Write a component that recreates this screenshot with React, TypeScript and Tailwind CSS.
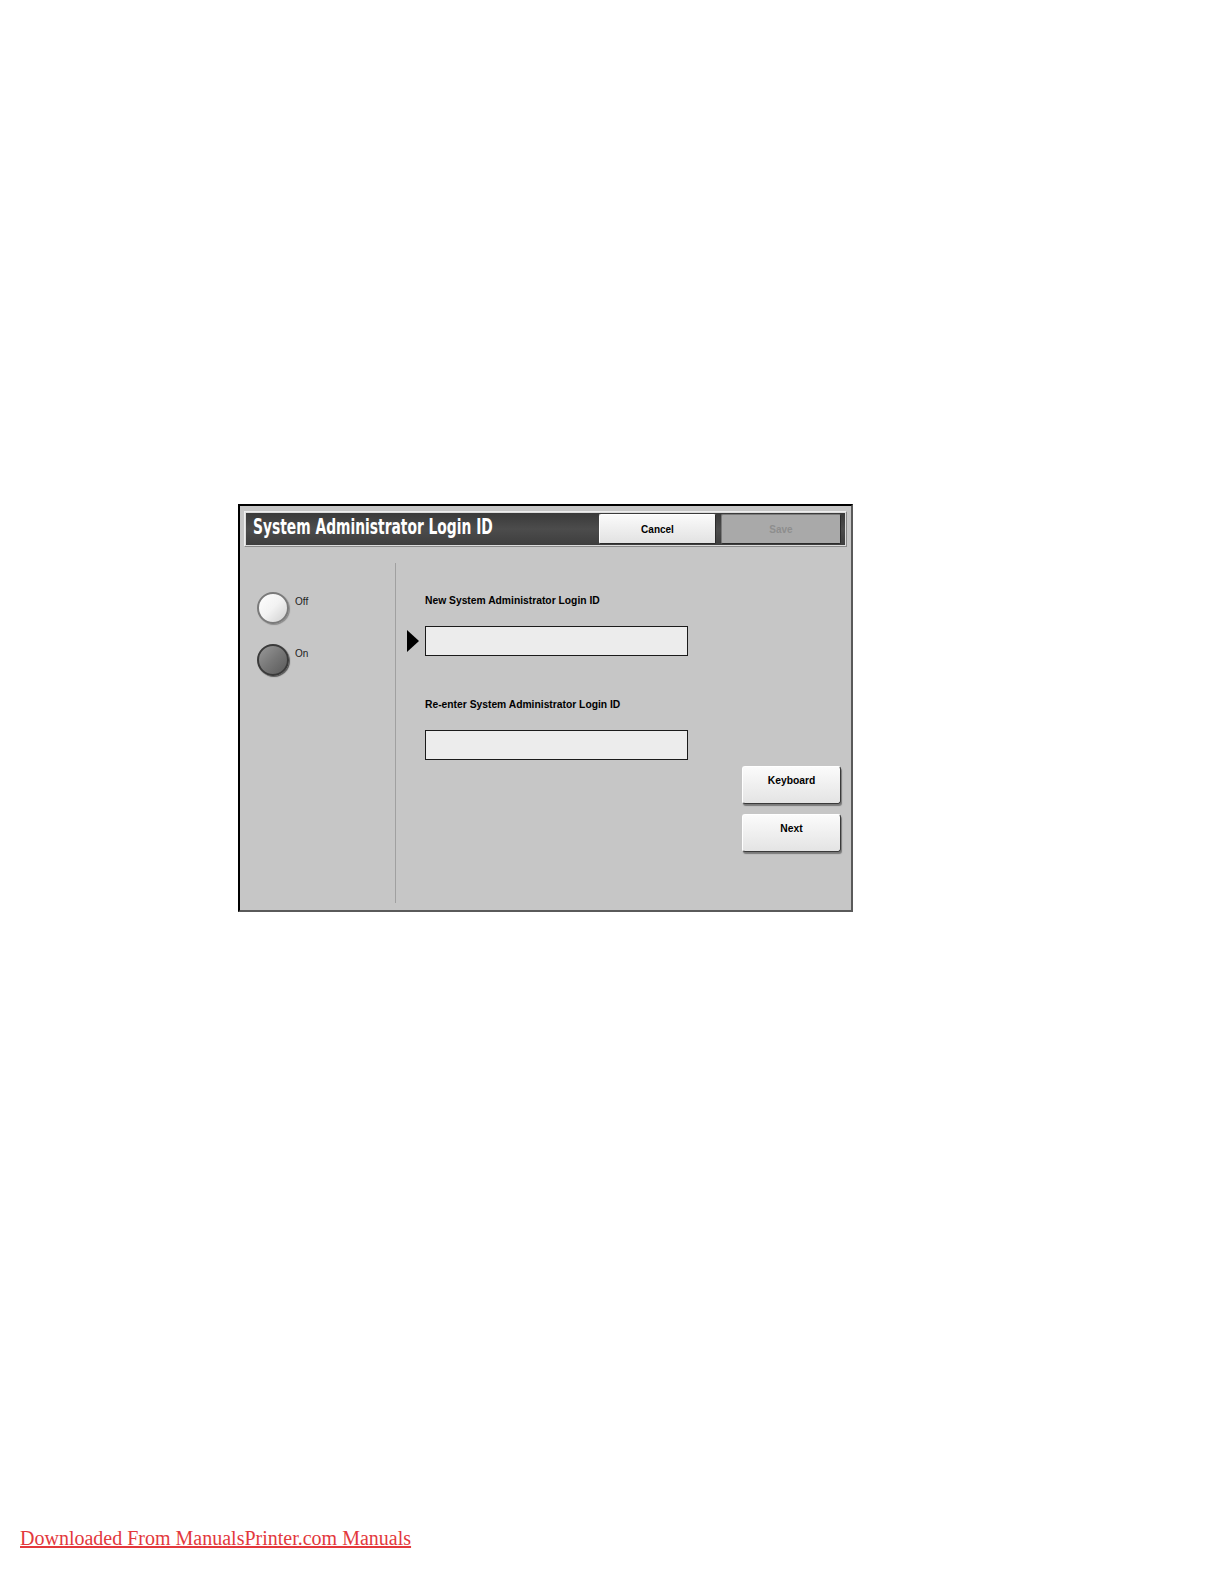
export default function App() {
  const ui = { fontFamily: '"Liberation Sans", Arial, sans-serif' };

  return (
    <div className="w-full bg-white flex flex-col pb-[30px]">
      <div className="pt-[504px] pl-[238px]">
        <div
          className="w-[615px] h-[408px] bg-[#c6c6c6] border-t-2 border-l-2 border-t-black border-l-black border-r-2 border-b-2 border-r-[#5a5a5a] border-b-[#5a5a5a] pt-[5px] px-[4px] flex flex-col"
          style={ui}
        >
          {/* title bar */}
          <div className="h-[36px] flex items-center border border-t-[#eeeeee] border-l-[#eeeeee] border-r-[#8a8a8a] border-b-[#8a8a8a] bg-[#dcdcdc] p-[1px]">
            <div className="flex-1 h-full flex items-center bg-gradient-to-b from-[#3a3a3a] via-[#4c4c4c] to-[#3e3e3e] pl-[7px] pr-[4px]">
              <div className="flex-1 min-w-0">
                <span
                  className="inline-block origin-left scale-x-[0.75] text-white font-bold text-[20.5px] leading-none whitespace-nowrap"
                  style={{ fontFamily: '"DejaVu Sans Condensed", "DejaVu Sans", sans-serif' }}
                >
                  System Administrator Login ID
                </span>
              </div>
              <button className="w-[117px] h-[30px] mr-[5px] rounded-[2px] bg-gradient-to-b from-[#fafafa] to-[#e2e2e2] border border-t-[#ffffff] border-l-[#ffffff] border-r-[#2a2a2a] border-b-[#2a2a2a] text-[10px] font-bold text-black">
                Cancel
              </button>
              <button className="w-[120px] h-[30px] rounded-[2px] bg-[#a9a9a9] border border-t-[#7a7a7a] border-l-[#7a7a7a] border-r-[#2a2a2a] border-b-[#2a2a2a] text-[10px] font-bold text-[#8e8e8e]">
                Save
              </button>
            </div>
          </div>

          {/* body */}
          <div className="flex-1 flex">
            <div className="w-[151px] pt-[45px] pl-[13px] flex flex-col gap-[20px]">
              <div className="flex items-start gap-[6px]">
                <div className="w-[32px] h-[32px] rounded-full border-2 border-[#7a7a7a] bg-gradient-to-br from-[#ffffff] via-[#f2f2f2] to-[#cfcfcf] shadow-[1px_1px_1px_#8a8a8a]" />
                <span className="text-[10px] leading-[12px] text-[#222] mt-[4px]">Off</span>
              </div>
              <div className="flex items-start gap-[6px]">
                <div className="w-[32px] h-[32px] rounded-full border-2 border-[#3a3a3a] bg-gradient-to-br from-[#9a9a9a] via-[#777777] to-[#5a5a5a] shadow-[1px_1px_1px_#555]" />
                <span className="text-[10px] leading-[12px] text-[#222] mt-[4px]">On</span>
              </div>
            </div>

            <div className="w-px bg-[#a0a0a0] mt-[16px] mb-[7px]" />

            <div className="flex-1 flex pl-[11px] pr-[6px]">
              <div className="flex-1 flex flex-col pt-[48px]">
                <div className="pl-[18px] text-[10.3px] leading-[12px] font-bold text-black">
                  New System Administrator Login ID
                </div>
                <div className="flex items-center mt-[19px]">
                  <div className="w-[18px] flex items-center">
                    <svg width="12" height="22" viewBox="0 0 12 22">
                      <polygon points="0,0 12,11 0,22" fill="#000" />
                    </svg>
                  </div>
                  <div className="w-[263px] h-[30px] bg-[#ececec] border border-[#1a1a1a]" />
                </div>
                <div className="pl-[18px] mt-[43px] text-[10.3px] leading-[12px] font-bold text-black">
                  Re-enter System Administrator Login ID
                </div>
                <div className="flex items-center mt-[19px]">
                  <div className="w-[18px]" />
                  <div className="w-[263px] h-[30px] bg-[#ececec] border border-[#1a1a1a]" />
                </div>
              </div>

              <div className="flex flex-col gap-[10px] pt-[219px]">
                <button className="w-[99px] h-[38px] rounded-[3px] bg-gradient-to-b from-[#fbfbfb] to-[#e4e4e4] border border-t-[#ffffff] border-l-[#ffffff] border-r-[#3a3a3a] border-b-[#3a3a3a] shadow-[1px_2px_1px_#7a7a7a] text-[10.3px] font-bold text-black flex justify-center pt-[6px]">
                  Keyboard
                </button>
                <button className="w-[99px] h-[38px] rounded-[3px] bg-gradient-to-b from-[#fbfbfb] to-[#e4e4e4] border border-t-[#ffffff] border-l-[#ffffff] border-r-[#3a3a3a] border-b-[#3a3a3a] shadow-[1px_2px_1px_#7a7a7a] text-[10.3px] font-bold text-black flex justify-center pt-[6px]">
                  Next
                </button>
              </div>
            </div>
          </div>
        </div>
      </div>

      <div className="mt-[614px] pl-[20px]">
        <a
          href="#"
          className="text-[20px] leading-[24px] text-[#e3383c] underline"
          style={{ fontFamily: '"Liberation Serif", "Times New Roman", serif' }}
        >
          Downloaded From ManualsPrinter.com Manuals
        </a>
      </div>
    </div>
  );
}
